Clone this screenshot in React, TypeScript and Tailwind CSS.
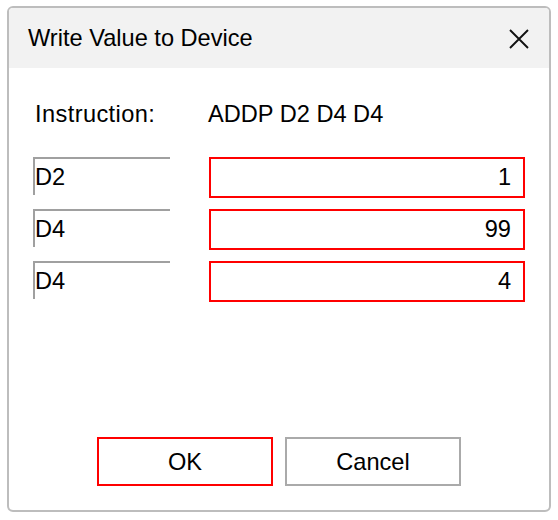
const rows = [
  { name: "D2", value: "1" },
  { name: "D4", value: "99" },
  { name: "D4", value: "4" },
];

export default function App() {
  return (
    <div className="w-[558px] h-[520px] bg-white pt-[6px] pl-[7px] font-['Liberation_Sans',Arial,sans-serif] text-[23.6px] text-black">
      <div className="w-[544px] h-[506px] border-2 border-[#bdbdbd] rounded-[6px] overflow-hidden flex flex-col">
        {/* title bar */}
        <div className="h-[60px] bg-[#f2f2f2] flex items-center justify-between pl-[19px] pr-[20px]">
          <span className="leading-none pt-[1px]">Write Value to Device</span>
          <svg width="20" height="20" viewBox="0 0 20 20" className="mt-[1px]">
            <path d="M1 1 L19 19 M19 1 L1 19" stroke="#111" strokeWidth="1.9" fill="none" />
          </svg>
        </div>

        <div className="flex-1 flex flex-col px-6">
          <div className="mt-[33px] h-[28px] flex items-center leading-none">
            <span className="w-[175px] pl-[2px] tracking-[0.4px]">Instruction:</span>
            <span>ADDP D2 D4 D4</span>
          </div>

          <div className="mt-[28px] flex flex-col gap-[11px]">
            {rows.map((r, i) => (
              <div key={i} className="flex items-start gap-[39px]">
                <div className="w-[137px] h-[38px] border-t-2 border-l-2 border-[#a0a0a0] flex items-center leading-none pt-[1px]">
                  {r.name}
                </div>
                <div className="w-[316px] h-[41px] border-2 border-[#ff0000] flex items-center justify-end pr-[12px] leading-none pt-[1px]">
                  {r.value}
                </div>
              </div>
            ))}
          </div>

          <div className="mt-auto mb-[24px] flex justify-center gap-[12px]">
            <button className="w-[176px] h-[49px] border-2 border-[#ff0000] bg-white flex items-center justify-center leading-none pt-[2px]">
              OK
            </button>
            <button className="w-[176px] h-[49px] border-2 border-[#aaaaaa] bg-white flex items-center justify-center leading-none pt-[2px]">
              Cancel
            </button>
          </div>
        </div>
      </div>
    </div>
  );
}
